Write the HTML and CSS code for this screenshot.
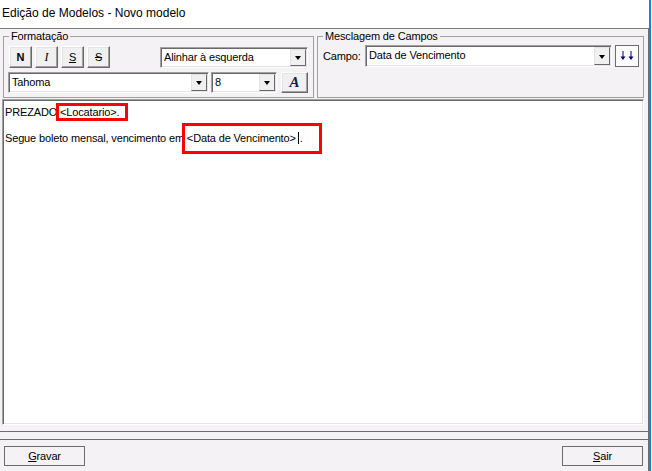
FILE: index.html
```html
<!DOCTYPE html>
<html lang="pt-BR">
<head>
    <meta charset="UTF-8">
    <title>Edição de Modelos - Novo modelo</title>
    <link rel="stylesheet" href="styles.css">
</head>
<body>
    <div class="window">
        <div class="titlebar">Edição de Modelos - Novo modelo</div>

        <div class="client">
            <div class="main">
                <div class="toolbar">
                    <div class="group group-format">
                        <div class="group-title">Formatação</div>
                        <div class="row">
                            <button class="tool tool-bold">N</button>
                            <button class="tool tool-italic">I</button>
                            <button class="tool tool-underline">S</button>
                            <button class="tool tool-strike">S</button>
                            <div class="combo combo-align">
                                <span class="combo-text">Alinhar à esquerda</span>
                                <span class="combo-arrow"></span>
                            </div>
                        </div>
                        <div class="row row-font">
                            <div class="combo combo-font">
                                <span class="combo-text">Tahoma</span>
                                <span class="combo-arrow"></span>
                            </div>
                            <div class="combo combo-size">
                                <span class="combo-text">8</span>
                                <span class="combo-arrow"></span>
                            </div>
                            <button class="tool tool-color">A</button>
                        </div>
                    </div>

                    <div class="group group-merge">
                        <div class="group-title">Mesclagem de Campos</div>
                        <div class="row row-merge">
                            <span class="label">Campo:</span>
                            <div class="combo combo-field">
                                <span class="combo-text">Data de Vencimento</span>
                                <span class="combo-arrow"></span>
                            </div>
                            <button class="tool tool-insert">
                                <svg width="22" height="20" viewBox="0 0 22 20">
                                    <path d="M7 5v7M15 5v7" stroke="#000080" stroke-width="1"/>
                                    <path d="M4.5 10.5h5L7 14zM12.5 10.5h5L15 14z" fill="#000080"/>
                                </svg>
                            </button>
                        </div>
                    </div>
                </div>

                <div class="editor">
                    <p>PREZADO <span class="mark mark-name">&lt;Locatario&gt;.</span></p>
                    <p>&nbsp;</p>
                    <p>Segue boleto mensal, vencimento em <span class="mark mark-date">&lt;Data de Vencimento&gt;<span class="caret"></span>.</span></p>
                </div>
            </div>

            <div class="footer">
                <button class="btn"><u>G</u>ravar</button>
                <button class="btn"><u>S</u>air</button>
            </div>
        </div>
    </div>
</body>
</html>
```

FILE: styles.css
```css
* {
    margin: 0;
    padding: 0;
    box-sizing: border-box;
}

body {
    font-family: 'Liberation Sans', Arial, sans-serif;
    font-size: 11px;
    letter-spacing: -0.15px;
    color: #000;
    background-color: #fff;
    width: 652px;
    height: 471px;
    overflow: hidden;
}

button {
    font-family: inherit;
    font-size: inherit;
    letter-spacing: inherit;
    color: inherit;
}

.window {
    width: 651px;
    height: 471px;
    display: flex;
    flex-direction: column;
    border-right: 2px solid #1883d7;
}

.titlebar {
    height: 29px;
    padding: 5px 0 0 2px;
    font-size: 12px;
    line-height: 16px;
    letter-spacing: 0;
    background-color: #fff;
    border-bottom: 1px solid #7a7a7a;
}

.client {
    flex: 1;
    display: flex;
    flex-direction: column;
    background-color: #f5f2f5;
    border-right: 1px solid #6d6d6d;
}

.main {
    flex: 1;
    display: flex;
    flex-direction: column;
    padding-bottom: 6px;
    margin-bottom: 7px;
    border-bottom: 1px solid #6d6d6d;
}

/* group boxes */

.toolbar {
    height: 70px;
    display: flex;
    gap: 3px;
    padding: 7px 0 0 3px;
}

.group {
    height: 62px;
    border: 1px solid #a0a0a0;
    padding: 0 5px;
}

.group-format {
    width: 311px;
}

.group-merge {
    width: 327px;
    padding-right: 4px;
}

.group-title {
    width: fit-content;
    margin-top: -7px;
    padding: 0 2px;
    line-height: 13px;
    background-color: #f5f2f5;
}

.row {
    display: flex;
    align-items: flex-start;
    gap: 3px;
    margin-top: 3px;
}

.row-font {
    margin-top: 4px;
    margin-left: -1px;
    gap: 0;
}

.row-merge {
    margin-top: 2px;
    gap: 0;
    align-items: center;
}

.label {
    width: 42px;
}

/* raised buttons */

.tool {
    width: 23px;
    height: 22px;
    background-color: #f0f0f0;
    border: 1px solid;
    border-color: #fff #696969 #696969 #fff;
    box-shadow: inset -1px -1px #a0a0a0, inset 1px 1px #e3e3e3;
    display: flex;
    justify-content: center;
    align-items: center;
    line-height: 1;
}

.tool-bold {
    font-weight: bold;
}

.tool-italic {
    font-family: 'Liberation Serif', serif;
    font-style: italic;
    font-size: 12px;
}

.tool-underline {
    text-decoration: underline;
}

.tool-strike {
    text-decoration: line-through;
}

.tool-color {
    width: 27px;
    height: 21px;
    margin-left: 4px;
    font-family: 'Liberation Serif', serif;
    font-weight: bold;
    font-style: italic;
    font-size: 15px;
    color: #1c1c50;
}

.tool-insert {
    width: 24px;
    height: 22px;
    margin-left: 3px;
    background-color: #fbfbfb;
    border-color: #6d6d6d;
    box-shadow: none;
}

.tool-insert svg {
    display: block;
}

/* combo boxes */

.combo {
    height: 21px;
    display: flex;
    align-items: stretch;
    background-color: #fff;
    border: 1px solid;
    border-color: #a0a0a0 #fff #fff #a0a0a0;
    box-shadow: inset 1px 1px #696969, inset -1px -1px #e3e3e3;
    padding: 1px;
}

.combo-text {
    flex: 1;
    padding-left: 2px;
    line-height: 17px;
    white-space: nowrap;
}

.combo-arrow {
    width: 16px;
    background-color: #f0f0f0;
    border: 1px solid;
    border-color: #e3e3e3 #696969 #696969 #e3e3e3;
    display: flex;
    justify-content: center;
    align-items: center;
}

.combo-arrow::before {
    content: '';
    border-left: 3.5px solid transparent;
    border-right: 3.5px solid transparent;
    border-top: 4px solid #000;
    margin-top: 1px;
}

.combo-align {
    width: 148px;
    margin-left: auto;
    margin-top: 1px;
}

.combo-font {
    width: 201px;
}

.combo-size {
    width: 66px;
    margin-left: 2px;
}

.combo-field {
    width: 247px;
    height: 22px;
}

/* editor */

.editor {
    flex: 1;
    margin: 0 4px 0 2px;
    padding: 6px 2px 0;
    background-color: #fff;
    border: 1px solid;
    border-color: #a0a0a0 #fff #fff #a0a0a0;
    box-shadow: inset 1px 1px #696969, inset -1px -1px #e3e3e3;
    line-height: 13px;
    white-space: nowrap;
}

.mark {
    position: relative;
}

.mark::after {
    content: '';
    position: absolute;
    border: 3px solid #f00;
}

.mark-name::after {
    left: -4px;
    right: -9px;
    top: -3px;
    bottom: -3px;
}

.mark-date::after {
    left: -5px;
    right: -19px;
    top: -9px;
    bottom: -10px;
}

.caret {
    display: inline-block;
    width: 1px;
    height: 12px;
    margin: 0 1px 0 2px;
    background-color: #000;
    vertical-align: -2px;
}

/* bottom buttons */

.footer {
    height: 32px;
    display: flex;
    justify-content: space-between;
    padding: 6px 5px 0 4px;
    border-top: 1px solid #6d6d6d;
}

.btn {
    width: 81px;
    height: 20px;
    background-color: #f5f2f5;
    border: 1px solid #6d6d6d;
    line-height: 16px;
}

.btn u {
    text-decoration: underline;
}
```
